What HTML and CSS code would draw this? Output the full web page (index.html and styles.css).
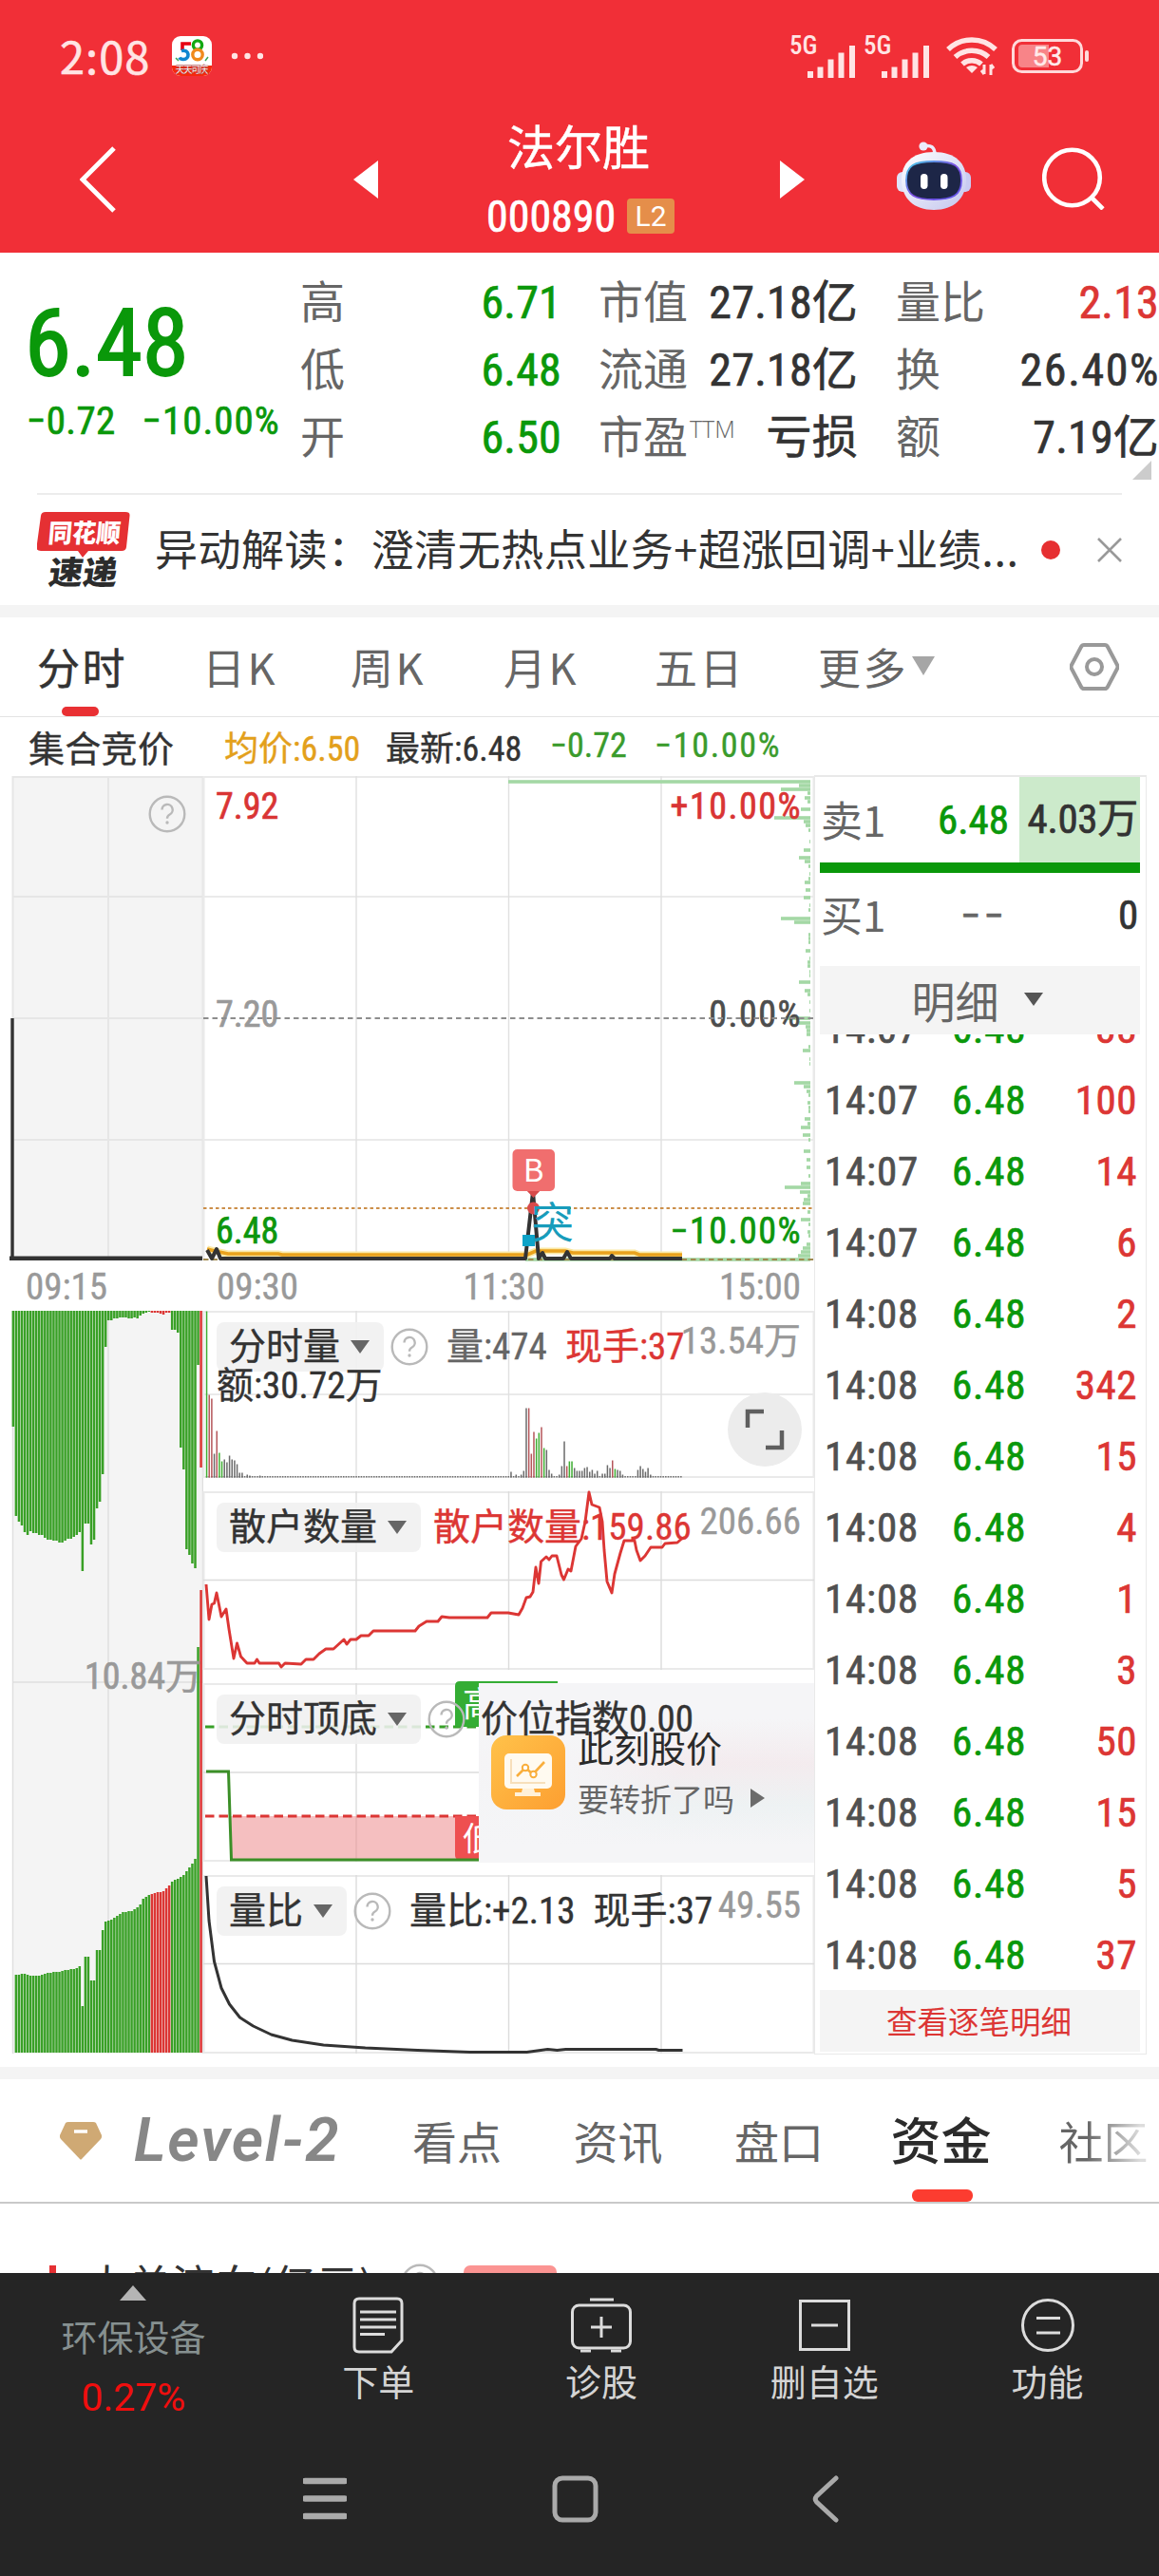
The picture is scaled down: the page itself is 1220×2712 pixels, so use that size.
FILE: index.html
```html
<!DOCTYPE html>
<html lang="zh-CN">
<head>
<meta charset="utf-8">
<title>法尔胜 000890</title>
<link rel="stylesheet" href="styles.css">
</head>
<body>
<svg class="defs" width="0" height="0">
  <symbol id="help" viewBox="0 0 40 40"><circle cx="20" cy="20" r="18.3" fill="none" stroke="#b9b9b9" stroke-width="2.4"/><path d="M14.5 15.5a5.6 5.6 0 1 1 8.2 5c-1.9 1-2.7 2-2.7 4.2" fill="none" stroke="#b9b9b9" stroke-width="2.4"/><circle cx="20" cy="29" r="1.7" fill="#b9b9b9"/></symbol>
  <symbol id="signal" viewBox="0 0 54 34"><path d="M2.5 34v-7M13 34V22.500M24 34V14.500M35 34V7.500M46.500 34V0" transform="translate(1.500 0)" stroke="#ffe4e4" stroke-width="6" fill="none"/></symbol>
</svg>

<header class="header">
  <div class="status">
    <span class="clock">2:08</span>
    <svg class="app58" viewBox="0 0 42 42"><rect width="42" height="42" rx="9" fill="#fff"/><path d="M0 31h42v2a9 9 0 0 1-9 9H9a9 9 0 0 1-9-9z" fill="#f5280d"/><path d="M20 8h-9v7" fill="none" stroke="#e60012" stroke-width="3.600"/><path d="M10 15.500c9-2 9 9 2 9q-3 0-4-2" fill="none" stroke="#1187d0" stroke-width="3.600"/><circle cx="27" cy="9.500" r="4.600" fill="none" stroke="#12a812" stroke-width="3.400"/><circle cx="27" cy="19.500" r="5.200" fill="none" stroke="#f08a1c" stroke-width="3.400"/><path d="M4 23l3 3M38 22l-3 4" stroke="#3aa657" stroke-width="1.500"/><text x="21" y="38.500" text-anchor="middle" font-size="10" font-weight="700" fill="#fff" stroke="#a33" stroke-width=".4" textLength="35">天天可庆</text></svg>
    <svg class="dots" viewBox="0 0 34 8"><circle cx="4" cy="4" r="3.200"/><circle cx="17.500" cy="4" r="3.200"/><circle cx="31" cy="4" r="3.200"/></svg>
    <div class="cell"><b>5G</b><svg width="54" height="34"><use href="#signal"/></svg></div>
    <div class="cell"><b>5G</b><svg width="54" height="34"><use href="#signal"/></svg></div>
    <svg class="wifi" viewBox="0 0 54 42"><g fill="none" stroke="#ffe4e4" stroke-width="5.500"><path d="M2 14a36 36 0 0 1 50 0"/><path d="M9.500 22a26 26 0 0 1 35 0"/><path d="M17 29.500a15 15 0 0 1 20 0"/></g><path d="M21 33q6-4 12 0l-6 6z" fill="#ffe4e4"/><path d="M40 30v10M40 40l-3-4M47 41V30M47 30l3 4" stroke="#ffe4e4" stroke-width="3"/></svg>
    <svg class="battery" viewBox="0 0 82 36"><rect x="1.500" y="1.500" width="72" height="33" rx="9" fill="none" stroke="#ffd9da" stroke-width="3"/><path d="M11 6h28v24H11q-4 0-4-4V10q0-4 4-4z" fill="#f88488"/><rect x="77" y="12" width="4" height="12" rx="2" fill="#ffd9da"/><text x="37.500" y="28" text-anchor="middle" fill="#ffeaea" stroke="#ffeaea" stroke-width=".5" font-size="28">53</text></svg>
  </div>
  <nav class="nav">
    <svg class="back" viewBox="0 0 38 70"><path d="M36 2L3 35l33 33" fill="none" stroke="#fff" stroke-width="5"/></svg>
    <svg class="prev" viewBox="0 0 26 40"><path d="M26 0v40L0 20z" fill="#fff"/></svg>
    <div class="name">
      <h1>法尔胜</h1>
      <div class="code"><span class="num">000890</span><i class="l2">L2</i></div>
    </div>
    <svg class="next" viewBox="0 0 26 40"><path d="M0 0v40l26-20z" fill="#fff"/></svg>
    <svg class="robot" viewBox="0 0 78 72">
      <defs><linearGradient id="shell" x1="0" y1="0" x2="1" y2="1"><stop offset="0" stop-color="#fff"/><stop offset="1" stop-color="#c3c6ee"/></linearGradient><linearGradient id="rim" x1="0" y1="0" x2="1" y2="1"><stop offset="0" stop-color="#43d0e8"/><stop offset=".5" stop-color="#7a4ee0"/><stop offset="1" stop-color="#5b55e8"/></linearGradient></defs>
      <path d="M28 5q12-3 12 9" fill="none" stroke="#ecebfb" stroke-width="3.500"/><circle cx="28" cy="5" r="4.600" fill="#ecebfb"/>
      <rect x="0" y="32" width="14" height="21" rx="6" fill="#dfe3fa"/><rect x="64" y="32" width="14" height="21" rx="6" fill="#c9cbf2"/>
      <path d="M39 11c23 0 34 12 34 29 0 20-13 32-34 32S5 60 5 40c0-17 11-29 34-29z" fill="url(#shell)"/>
      <path d="M39 21c21 0 29 4 29 20s-10 20-29 20-29-4-29-20 8-20 29-20z" fill="#1d2647" stroke="url(#rim)" stroke-width="1.800"/>
      <rect x="25" y="34" width="7.500" height="16" rx="3.700" fill="#fff"/><rect x="46" y="34" width="7.500" height="16" rx="3.700" fill="#fff"/>
    </svg>
    <svg class="search" viewBox="0 0 66 66"><circle cx="31.500" cy="32" r="29.300" fill="none" stroke="#fff" stroke-width="4.600"/><path d="M52 53l12 12" stroke="#fff" stroke-width="4.600"/></svg>
  </nav>
</header>

<section class="quote num">
  <div class="price down"><strong>6.48</strong><div><span>−0.72</span><span class="pct">−10.00%</span></div></div>
  <dl><dt>高</dt><dd class="down">6.71</dd><dt>低</dt><dd class="down">6.48</dd><dt>开</dt><dd class="down">6.50</dd></dl>
  <dl><dt>市值</dt><dd>27.18亿</dd><dt>流通</dt><dd>27.18亿</dd><dt>市盈<sup>TTM</sup></dt><dd>亏损</dd></dl>
  <dl><dt>量比</dt><dd class="up">2.13</dd><dt>换</dt><dd class="pct">26.40%</dd><dt>额</dt><dd>7.19亿</dd></dl>
  <svg class="corner" viewBox="0 0 20 20"><path d="M20 0v20H0z" fill="#ccc"/></svg>
</section>

<section class="news">
  <svg class="newslogo" viewBox="0 0 98 80"><path d="M9 0h84q5 0 4.500 4L94 37q-.5 4-5 4H54l-6 7-5-7H4q-5 0-4.500-4L4 4q.5-4 5-4z" fill="#e53033"/><g font-weight="900" text-anchor="middle"><text transform="translate(49 32) skewX(-5)" font-size="27" fill="#fff" textLength="76" lengthAdjust="spacingAndGlyphs">同花顺</text><text transform="translate(47 76) skewX(-8)" font-size="34" fill="#2c2c2c" textLength="72" lengthAdjust="spacingAndGlyphs">速递</text></g></svg>
  <p>异动解读：澄清无热点业务+超涨回调+业绩...</p>
  <i class="reddot"></i>
  <svg class="close" viewBox="0 0 26 26"><path d="M1 1l24 24M25 1L1 25" stroke="#999" stroke-width="2.600"/></svg>
</section>

<div class="band"></div>

<nav class="periods">
  <a class="on">分时</a><a>日K</a><a>周K</a><a>月K</a><a>五日</a>
  <a class="more">更多<svg viewBox="0 0 24 20"><path d="M0 0h24L12 20z" fill="#a6a6a6"/></svg></a>
  <svg class="hex" viewBox="0 0 52 50"><path d="M15 2h22q2 0 3 2l10 19q1 2 0 4L40 46q-1 2-3 2H15q-2 0-3-2L2 27q-1-2 0-4L12 4q1-2 3-2z" fill="none" stroke="#999" stroke-width="4"/><circle cx="26" cy="25" r="8" fill="none" stroke="#999" stroke-width="4"/></svg>
</nav>

<main class="board">
  <div class="charts">
    <div class="info num"><span>集合竞价</span><span class="avg">均价:6.50</span><span>最新:6.48</span><span class="g">−0.72</span><span class="g pct">−10.00%</span></div>

    <svg class="auction-price" viewBox="10 817 204 510">
      <rect x="13" y="817" width="201" height="510" fill="#f4f4f4"/>
      <path d="M13 818h201M13 944h201M13 1072h201M13 1200h201M13.500 817v510M114 817v510M213.500 817v510" stroke="#e6e6e6" stroke-width="2" fill="none"/>
      <path d="M13 1072v253" stroke="#333" stroke-width="3.400"/><path d="M10 1325.500h203" stroke="#333" stroke-width="6"/>
      <use href="#help" x="156" y="837" width="40" height="40"/>
    </svg>
    <svg class="price-chart" viewBox="214 817 643 510">
      <path d="M214 818h643M214 944h643M214 1200h643M214.500 817v510M856.500 817v510" stroke="#eaeaea" stroke-width="2" fill="none"/>
      <path d="M375 817v510M535.500 817v510M696 817v510" stroke="#e0e0e0" stroke-width="1.400" fill="none"/>
      <g id="distribution" fill="#a4d8a5"></g>
      <g class="axis">
        <text x="227" y="862" fill="#d93434">7.92</text><text class="pct" x="844" y="862" fill="#d93434" text-anchor="end">+10.00%</text>
        <text x="227" y="1081" fill="#999">7.20</text><text class="pct" x="844" y="1081" fill="#4d4d4d" text-anchor="end">0.00%</text>
        <text x="227" y="1309" fill="#0d960d">6.48</text><text class="pct" x="844" y="1309" fill="#0d960d" text-anchor="end">−10.00%</text>
      </g>
      <path d="M214 1072h643" stroke="#8d8d8d" stroke-width="2" stroke-dasharray="5.500 4"/>
      <path d="M214 1272h643" stroke="#cc8f4a" stroke-width="2" stroke-dasharray="3.500 3"/>
      <path d="M214 1326h643" stroke="#a08a50" stroke-width="2" stroke-dasharray="5.500 4"/>
      <path d="M218 1315l8 2 14 3h53l4 1h258l9-4h31l8 2h65l5 2h45" fill="none" stroke="#fbe9a6" stroke-width="7"/>
      <path d="M218 1315l8 2 14 3h53l4 1h258l9-4h31l8 2h65l5 2h45" fill="none" stroke="#e9a21d" stroke-width="3.600"/>
      <path d="M218 1316l5 9 5-10 4 10h321l8-70 6 70 4-6 3 6h19l4-7 4 7h41l2-3 3 3h71" fill="none" stroke="#333" stroke-width="4" stroke-linejoin="round"/>
      <circle cx="561.500" cy="1272" r="6.500" fill="#d84a4a"/>
      <path d="M553 1252h17l-8.500 9z" fill="#d84a4a"/>
      <rect x="539.500" y="1210" width="44.500" height="44" rx="5" fill="#f06e6e"/>
      <text x="561.500" y="1244" font-size="33" fill="#fff" text-anchor="middle">B</text>
      <rect x="550" y="1300" width="13" height="12" fill="#0ea3c8"/>
      <text x="559" y="1304" font-size="45" fill="#189cbb">突</text>
    </svg>
    <div class="auction-time axis-time"><span>09:15</span></div>
    <div class="times axis-time"><span>09:30</span><span>11:30</span><span>15:00</span></div>

    <svg class="auction-volume" viewBox="10 1380 204 782">
      <rect x="13" y="1380" width="201" height="782" fill="#f4f4f4"/>
      <path d="M13 1771h201M13.500 1380v782M114 1380v782M213.500 1380v782" stroke="#dedede" stroke-width="1.400" fill="none"/>
      <g id="auction-bars"></g>
      <text x="212" y="1778" text-anchor="end" class="axis" fill="#999">10.84万</text>
    </svg>

    <div class="panes num">
      <section class="pane p1">
        <svg viewBox="214 1380 643 176">
          <path d="M214 1381h643M214 1468h643M214 1555h643M214.500 1380v176M856.500 1380v176" stroke="#eaeaea" stroke-width="2" fill="none"/>
          <path d="M375 1380v176M535.500 1380v176M696 1380v176" stroke="#e0e0e0" stroke-width="1.400" fill="none"/>
          <g id="volume-bars"></g>
        </svg>
        <div class="legend"><b class="pick">分时量<i></i></b><svg class="q"><use href="#help"/></svg><span class="grey">量:474</span><span class="up">现手:37</span></div>
        <div class="second">额:30.72万</div>
        <em>13.54万</em>
        <svg class="expand" viewBox="0 0 78 78"><circle cx="39" cy="39" r="39" fill="#ececec"/><path d="M21 37V20h17M57 40v18H40" fill="none" stroke="#5f5f5f" stroke-width="4.500"/></svg>
      </section>
      <section class="pane">
        <svg viewBox="214 1570 643 188">
          <path d="M214 1571h643M214 1757h643M214.500 1570v188M856.500 1570v188" stroke="#eaeaea" stroke-width="2" fill="none"/>
          <path d="M214 1663.500h643M375 1570v188M535.500 1570v188M696 1570v188" stroke="#dcdcdc" stroke-width="1.400" fill="none"/>
        </svg>
        <div class="legend"><b class="pick">散户数量<i></i></b><span class="up">散户数量:159.86</span></div>
        <em>206.66</em>
        <svg class="over" viewBox="214 1570 643 188">
          <polyline points="217,1668 220,1705 223,1689 225.500,1688 228,1677 233,1702 238,1694 241,1715 246,1746 249.500,1730 253.500,1744 260,1751 268,1751 270.500,1747 273,1751 293.500,1751 296,1755 300,1751 317,1752 322,1747 330,1747 336,1741 343,1736 351,1736 362,1726 365,1731 369,1726 375,1726 380,1722 388,1722 393,1717 437,1717 441,1712 449,1707 461,1707 465,1702 473,1703 513,1703 517,1698 535,1698 546,1700 550,1693 554,1682 558,1681 561,1676 564,1650 567,1667 569.500,1644 575,1639 578,1642 581,1638 586,1638 591,1658 593.500,1663 598,1652 601,1654 606,1628 612,1620 616,1602 620,1571 623,1584 631,1587 634,1602 636,1632 639,1665 644,1677 647,1657 653,1635 657,1622 668,1622 670,1632 674,1643 679,1638 685,1629 697,1629 700,1625 713,1624 717.500,1620" fill="none" stroke="#dc3634" stroke-width="2.900" stroke-linejoin="round"/>
        </svg>
      </section>
      <section class="pane p3">
        <svg viewBox="214 1772 643 188">
          <path d="M214 1773h643M214 1959h643M214.500 1772v188M856.500 1772v188" stroke="#eaeaea" stroke-width="2" fill="none"/>
          <path d="M214 1866h643M375 1772v188M535.500 1772v188" stroke="#dcdcdc" stroke-width="1.400" fill="none"/>
          <path d="M243 1912h262v45H243z" fill="#f5bfc0"/><path d="M375 1912v45" stroke="#e6afb0" stroke-width="1.400"/>
          <path d="M216 1818h290" stroke="#38a028" stroke-width="3" stroke-dasharray="9.500 5"/>
          <path d="M216 1912h290" stroke="#dc3634" stroke-width="3" stroke-dasharray="9.500 5"/>
          <path d="M484 1770h103v3h-83v45h-25v-43q0-5 5-5z" fill="#34ad34"/><text x="487" y="1807" font-size="36" fill="#fff">高</text>
          <path d="M479 1912h30v46h-25q-5 0-5-5z" fill="#ee4f50"/><text x="487" y="1948" font-size="34" fill="#fff">低</text>
          <path d="M217 1865h23.500l3 93h265" fill="none" stroke="#3b8f27" stroke-width="3"/>
        </svg>
        <div class="promo">
          <svg class="promo-icon" viewBox="0 0 78 78"><defs><linearGradient id="or" x1="0" y1="0" x2="1" y2="1"><stop offset="0" stop-color="#ffc24a"/><stop offset="1" stop-color="#fd9f31"/></linearGradient></defs><rect width="78" height="78" rx="16" fill="url(#or)"/><rect x="14" y="19" width="50" height="37" rx="5" fill="#fffaf0"/><path d="M33 56h12l1 4h6v4H25v-4h7z" fill="#fff1d8"/><path d="M21 25v25h36" fill="none" stroke="#f7dfba" stroke-width="2"/><path d="M27 43l9-9 8 7 12-13" fill="none" stroke="#f9ae3c" stroke-width="2.600"/><circle cx="36" cy="34" r="3.200" fill="#fff" stroke="#f9ae3c" stroke-width="2"/><circle cx="44.500" cy="41" r="3.200" fill="#fff" stroke="#f9ae3c" stroke-width="2"/></svg>
          <div><p>此刻股价</p><p class="sub">要转折了吗<svg viewBox="0 0 15 20"><path d="M0 0l15 10L0 20z" fill="#6b6b6b"/></svg></p></div>
        </div>
        <div class="legend"><b class="pick">分时顶底<i></i></b><svg class="q"><use href="#help"/></svg><span>价位指数0.00</span></div>
      </section>
      <section class="pane p4">
        <svg viewBox="214 1974 643 188">
          <path d="M214 1975h643M214 2161h643M214.500 1974v188M856.500 1974v188" stroke="#eaeaea" stroke-width="2" fill="none"/>
          <path d="M214 2067.500h643M375 1974v188M535.500 1974v188M696 1974v188" stroke="#dcdcdc" stroke-width="1.400" fill="none"/>
          <path d="M217 1975l3 47 5.500 43 7.500 28 8.500 17 11 14 14 9 19 9 22 6 33 5 44 3 55 2.500 55 2h60l22-3 10 1 9-1h95l3 1h25" fill="none" stroke="#333" stroke-width="3" stroke-linejoin="round"/>
        </svg>
        <div class="legend"><b class="pick">量比<i></i></b><svg class="q"><use href="#help"/></svg><span>量比:+2.13</span><span>现手:37</span></div>
        <em>49.55</em>
      </section>
    </div>
  </div>

  <aside class="orders num">
    <div class="level ask"><span>卖1</span><b class="down">6.48</b><b class="vol">4.03万</b></div>
    <div class="level bid"><span>买1</span><b class="none">−−</b><b class="vol">0</b></div>
    <div class="detail-head">明细<svg viewBox="0 0 20 14"><path d="M0 0h20L10 14z" fill="#555"/></svg></div>
    <ol class="ticks">
      <li><span>14:07</span><b>6.48</b><i>38</i></li>
      <li><span>14:07</span><b>6.48</b><i>100</i></li>
      <li><span>14:07</span><b>6.48</b><i>14</i></li>
      <li><span>14:07</span><b>6.48</b><i>6</i></li>
      <li><span>14:08</span><b>6.48</b><i>2</i></li>
      <li><span>14:08</span><b>6.48</b><i>342</i></li>
      <li><span>14:08</span><b>6.48</b><i>15</i></li>
      <li><span>14:08</span><b>6.48</b><i>4</i></li>
      <li><span>14:08</span><b>6.48</b><i>1</i></li>
      <li><span>14:08</span><b>6.48</b><i>3</i></li>
      <li><span>14:08</span><b>6.48</b><i>50</i></li>
      <li><span>14:08</span><b>6.48</b><i>15</i></li>
      <li><span>14:08</span><b>6.48</b><i>5</i></li>
      <li><span>14:08</span><b>6.48</b><i>37</i></li>
    </ol>
    <a class="all-ticks">查看逐笔明细</a>
  </aside>
</main>

<div class="band"></div>

<nav class="topics">
  <svg class="gem" viewBox="0 0 44 40"><path d="M9 0h26q2 0 3 1l6 13q.5 2-1 4L23 39q-1 1-2 0L1 18q-1.500-2-1-4L6 1q1-1 3-1z" fill="#cfa974"/><path d="M15 10h14" stroke="#fff" stroke-width="3.500"/></svg>
  <a class="l2brand">Level-2</a><a>看点</a><a>资讯</a><a>盘口</a><a class="on">资金</a><a class="fade">社区</a>
</nav>
<section class="flow">
  <i class="mark"></i><h2>大单流向(亿元)</h2><svg class="q"><use href="#help"/></svg><span class="tag">Level-2</span>
</section>

<footer class="toolbar">
  <a class="sector"><svg viewBox="0 0 28 16"><path d="M14 0l14 16H0z" fill="#b5b5b5"/></svg><span>环保设备</span><b>0.27%</b></a>
  <a><svg viewBox="0 0 54 60"><path d="M7 2h40q5 0 5 5v39L41 58H7q-5 0-5-5V7q0-5 5-5z"/><path d="M8 16h38M8 24h38M8 32h38M8 39.500h26"/></svg><span>下单</span></a>
  <a><svg viewBox="0 0 64 60"><path d="M20 3h25"/><rect x="1.500" y="9" width="61" height="45" rx="7"/><path d="M32 21v22M21 32h22M10 57h11M42 57h11"/></svg><span>诊股</span></a>
  <a><svg viewBox="0 0 54 60"><rect x="1.500" y="4.500" width="51" height="51"/><path d="M13 30h28"/></svg><span>删自选</span></a>
  <a><svg viewBox="0 0 56 60"><circle cx="28" cy="30" r="26.500"/><path d="M16 22.500h25M16 38h25"/></svg><span>功能</span></a>
</footer>
<footer class="sysnav">
  <svg viewBox="0 0 46 50"><path d="M2 6h42M2 24.500h42M2 43h42" stroke-width="6.500"/></svg>
  <svg viewBox="0 0 50 50"><rect x="3" y="3" width="43" height="44" rx="8" stroke-width="5"/></svg>
  <svg viewBox="0 0 32 50"><path d="M27 3L6.500 22q-2.500 3 0 6L27 47" stroke-width="5"/></svg>
</footer>
<script src="chart.js"></script>
</body>
</html>
```
FILE: chart.js
```js
const NS = 'http://www.w3.org/2000/svg';
const RED = '#dc3634';
const GREEN = '#39a026';

function bar(group, x, y, w, h, fill) {
  const r = document.createElementNS(NS, 'rect');
  r.setAttribute('x', x);
  r.setAttribute('y', y);
  r.setAttribute('width', w);
  r.setAttribute('height', h);
  if (fill) r.setAttribute('fill', fill);
  group.appendChild(r);
}

// Call auction: unmatched volume hangs from the top, matched volume stands at the bottom.
const unmatched = [122,216,222,226,233,236,232,234,234,236,236,239,241,241,242,242,244,244,242,240,240,238,236,233,274,224,224,246,241,208,201,172,38,10,10,8,8,7,7,7,8,8,7,8,5,3,2,1,2,2,2,3,4,2,2,20,20,23,144,167,251,257,266,271,57,165];
const matched = [0,82,82,83,83,82,81,81,81,81,82,83,84,84,85,85,85,86,87,87,88,88,89,91,49,101,101,76,76,108,108,129,138,139,140,142,144,146,148,148,149,149,151,153,156,162,164,166,167,168,169,169,170,173,176,180,182,183,185,187,191,195,199,204,427,487];
const auction = document.getElementById('auction-bars');
const step = 3.042;
unmatched.forEach((v, i) => {
  const red = (i >= 48 && i <= 54) || i === 65;
  bar(auction, 12.6 + i * step, 1380, 2.5, v, red ? RED : GREEN);
});
matched.forEach((v, i) => {
  const red = (i >= 48 && i <= 54) || i === 65;
  bar(auction, 12.6 + i * step, 2161 - v, 2.5, v, red ? RED : GREEN);
});

// Minute volume: [minute index, height, colour]; other traded minutes are a one-pixel stub.
const volume = document.getElementById('volume-bars');
const D = '#6b6b6b', R = '#b5565a', G = '#3fae32';
const minutes = [[0,175,G],[1,87,R],[2,83,R],[3,25,D],[4,49,R],[5,26,G],[6,17,G],[7,19,D],[8,16,D],[9,23,D],[10,19,D],[11,18,D],[12,14,D],[13,5,D],[14,5,D],[16,3,D],[17,2,D],[21,2,D],
[120,6,D],[122,3,D],[124,3,D],[125,7,D],[126,73,D],[127,73,R],[128,25,R],[129,48,R],[130,41,G],[131,47,G],[132,53,R],[133,31,G],[134,29,D],[135,8,D],[136,4,D],[139,3,D],[140,12,D],[141,38,D],[142,12,R],[143,17,G],[144,17,G],[145,10,D],[146,7,D],[147,7,D],[148,7,D],[149,10,D],[150,11,D],[151,6,D],[152,8,D],[153,4,D],[154,7,D],[156,4,D],[157,4,D],[158,13,D],[159,10,D],[160,18,R],[161,9,G],[162,8,D],[163,7,D],[164,3,D],[170,8,D],[171,12,D],[172,9,D],[173,6,D],[174,10,D],[175,3,D]];
for (let i = 0; i < 188; i++) bar(volume, 216.8 + i * 2.67, 1554, 1.5, 1.5, D);
minutes.forEach(([i, h, c]) => bar(volume, 216.8 + i * 2.67, 1555.5 - h, 1.5, h, c));

// Traded volume by price: [y, length].
const dist = document.getElementById('distribution');
[[823,318],[827,12],[831,31],[835,3],[840,6],[844,3],[852,10],[861,38],[865,7],[869,5],[874,2],[886,1],[895,7],[903,12],[907,6],[912,2],[920,1],[925,2],[929,6],[937,5],[945,7],[953,1],[958,2],[967,31],[971,17],[984,2],[988,2],[992,2],[1001,5],[1009,1],[1013,3],[1017,3],[1023,1],[1027,1],[1034,12],[1043,6],[1047,3],[1055,1],[1064,1],[1072,26],[1077,12],[1081,5],[1085,4],[1089,4],[1102,2],[1106,8],[1115,1],[1120,1],[1140,17],[1144,7],[1149,4],[1153,2],[1161,3],[1166,2],[1170,2],[1178,6],[1183,3],[1187,10],[1195,8],[1200,2],[1212,7],[1221,4],[1229,4],[1238,2],[1246,10],[1250,27],[1255,11],[1259,3],[1263,7],[1267,8],[1276,3],[1284,10],[1289,2],[1297,3],[1301,2],[1310,4],[1314,8],[1318,10],[1322,13],[1326,300]
].forEach(([y, w]) => bar(dist, 853 - w, y - 1.8, w, 3.6));
```
FILE: styles.css
```css
* { box-sizing: border-box; }
body { margin: 0; width: 1220px; background: #fff; color: #333; font-family: "Noto Sans CJK SC", sans-serif; font-weight: 400; }
h1, h2, p, dl, dd, ol { margin: 0; padding: 0; font-weight: inherit; }
b, i, em { font-weight: inherit; font-style: normal; }
svg { display: block; flex: none; }
.defs { position: absolute; }
.num, .axis, .axis-time { font-family: "Roboto Condensed", "Noto Sans CJK SC", sans-serif; }
.num, .axis-time { -webkit-text-stroke: .7px currentColor; }
.axis { stroke-width: .7px; }
.axis text[fill="#d93434"] { stroke: #d93434; }
.axis text[fill="#0d960d"] { stroke: #0d960d; }
.axis text[fill="#4d4d4d"] { stroke: #4d4d4d; }
.axis text[fill="#999"], text.axis { stroke: #999; }
.down { color: #0a980a; }
.up { color: #dc3634; }
.grey { color: #666; }
.pct { letter-spacing: 1.5px; }
.band { height: 13px; background: #f4f4f4; }

.header { height: 266px; background: #f12f37; color: #fff; overflow: hidden; }
.status { height: 112px; display: flex; align-items: center; padding: 6px 0 0 63px; color: #ffe4e4; }
.clock { width: 118px; margin-top: -3px; font: 400 47px/60px "Noto Sans CJK SC", sans-serif; letter-spacing: 1px; -webkit-text-stroke: .6px currentColor; }
.app58 { width: 42px; height: 42px; }
.dots { width: 34px; height: 8px; margin-left: 20px; fill: #ffe4e4; margin-right: 554px; }
.cell { width: 78px; height: 46px; position: relative; display: flex; align-items: flex-end; padding-left: 18px; }
.cell b { position: absolute; left: 0; top: -1px; font: 500 27px/26px "Roboto Condensed", sans-serif; }
.wifi { width: 54px; height: 42px; margin-left: 9px; }
.battery { width: 82px; height: 36px; margin-left: 15px; font-family: Roboto, sans-serif; }
.nav { height: 154px; display: flex; align-items: center; }
.back { width: 38px; height: 70px; margin-left: 84px; }
.prev { width: 26px; height: 40px; margin-left: 250px; }
.name { width: 198px; margin: 2px 111px 0 114px; text-align: center; }
.name h1 { margin: 0 -18px 0 -22px; font-size: 50px; line-height: 75px; font-weight: 400; height: 75px; -webkit-text-stroke: .5px #fff; }
.code { display: flex; align-items: center; justify-content: space-between; height: 75px; font-size: 46px; }
.l2 { width: 50px; height: 37px; border-radius: 4px; background: #e58e4a; font: 400 30px/37px Roboto, sans-serif; text-align: center; }
.next { width: 26px; height: 40px; }
.robot { width: 78px; height: 72px; margin: -8px 75px 0 97px; }
.search { width: 66px; height: 66px; margin-top: -3px; }

.quote { position: relative; height: 255px; display: grid; grid-template-columns: 276px 276px 273px 277px; column-gap: 0; padding: 17px 0 0 28px; }
.quote::after { content: ""; position: absolute; left: 39px; right: 39px; bottom: 0; height: 2px; background: #ececec; }
.price strong { display: block; font-size: 99px; line-height: 110px; font-weight: 400; margin: 23px 0 -3px -2px; -webkit-text-stroke: 1.8px currentColor; }
.price div { display: flex; gap: 28px; font-size: 41px; line-height: 60px; letter-spacing: .3px; white-space: nowrap; }
.price .pct { letter-spacing: 1px; }
.quote dl { display: grid; grid-template-columns: auto 1fr; grid-auto-rows: 71px; align-items: center; }
.quote dl:nth-of-type(1) { padding: 0 0 0 12px; margin-right: -11px; }
.quote dl:nth-of-type(2) { padding-left: 50px; margin-right: -50px; }
.quote dl:nth-of-type(3) { padding-left: 90px; margin-right: -90px; width: 367px; }
.quote dt { font-size: 47px; color: #666; line-height: 71px; height: 71px; white-space: nowrap; -webkit-text-stroke: 0; }
.quote dl:nth-of-type(2) dt { width: 104px; }
.quote dd { text-align: right; font-size: 48px; line-height: 71px; height: 71px; letter-spacing: .2px; white-space: nowrap; }
.quote dd.pct { letter-spacing: 1.6px; margin-right: -1px; }
.quote sup { font: 400 25px/1px "Open Sans", sans-serif; font-weight: 300; vertical-align: 16px; margin-left: 2px; }
.corner { position: absolute; left: 1192px; top: 219px; width: 20px; height: 20px; }

.news { height: 116px; display: flex; align-items: center; padding-left: 39px; }
.newslogo { width: 98px; height: 80px; }
.news p { width: 920px; margin: -5px 0 0 26px; font-size: 45px; line-height: 80px; letter-spacing: .52px; white-space: nowrap; }
.reddot { width: 20px; height: 20px; border-radius: 50%; background: #e62f31; margin: 0 39px 0 13px; }
.close { width: 26px; height: 26px; }

.periods { position: relative; height: 105px; border-bottom: 1px solid #e3e3e3; display: grid; grid-template-columns: 174px 156px 161px 159px 172px 265px 60px; align-items: center; padding-left: 39px; font-size: 45px; letter-spacing: 2.5px; color: #666; }
.periods a { display: flex; align-items: center; height: 100%; padding-bottom: 2px; }
.periods .on { position: relative; color: #333; -webkit-text-stroke: .5px #333; }
.periods .on::after { content: ""; position: absolute; left: 26px; bottom: 0; width: 39px; height: 10px; border-radius: 5px; background: #e93033; }
.more svg { width: 24px; height: 20px; margin-left: 4px; }
.hex { width: 52px; height: 50px; }

.board { height: 1421px; display: flex; }
.charts { width: 847px; margin-left: 10px; display: grid; grid-template-columns: 204px 643px; grid-template-rows: 62px 510px 53px 782px; }
.info { grid-column: span 2; display: grid; grid-template-columns: 206px 170px 173px 110px auto; padding: 0 0 2px 20px; align-items: center; font-size: 36px; white-space: nowrap; -webkit-text-stroke-width: .4px; }
.info span:first-child { font-size: 38px; letter-spacing: .3px; }
.info .pct { letter-spacing: 1.7px; }
.avg { color: #e3a01b; }
.g { color: #3a9b2c; }
.auction-price, .auction-volume { width: 204px; height: 100%; }
.price-chart { width: 643px; height: 510px; overflow: visible; }
.axis { font-size: 38px; }
.axis-time { display: flex; justify-content: space-between; font-size: 39px; line-height: 53px; color: #999; padding: 2px 14px 0 14px; height: 53px; -webkit-text-stroke-width: .4px; }
.auction-time { padding-left: 17px; }
.times span:nth-child(2) { margin-right: 10px; }

.panes { display: grid; grid-template-rows: 176px 188px 188px 188px; row-gap: 14px; -webkit-text-stroke-width: .4px; }
.pane { position: relative; font-size: 39px; }
.pane > svg:first-child, .over { position: absolute; left: 0; top: 0; width: 643px; height: 188px; overflow: visible; }
.p1 > svg:first-child { height: 176px; }
.legend { position: relative; display: flex; align-items: center; height: 52px; margin: 0; top: 12px; padding-left: 14px; white-space: nowrap; }
.pick { height: 52px; line-height: 52px; padding: 0 15px 0 13px; border-radius: 8px; background: rgba(240, 240, 240, .88); display: flex; align-items: center; }
.pick i { margin-left: 11px; border: 10px solid transparent; border-top: 14px solid #666; border-bottom: 0; }
.q { width: 40px; height: 40px; margin-left: 7px; }
.legend span { line-height: 52px; margin-left: 19px; }
.legend .pick + span { margin-left: 13px; }
.second { position: absolute; left: 14px; top: 53px; line-height: 52px; }
.pane em { position: absolute; right: 14px; top: 6px; line-height: 52px; color: #999; }
.expand { position: absolute; left: 552px; top: 86px; width: 78px; height: 78px; }
.promo { position: absolute; left: 290px; top: 0; width: 353px; height: 189px; display: flex; padding: 55px 0 0 13px; background: linear-gradient(100deg, rgba(245,245,247,.9) 30%, rgba(245,245,247,.2) 60%), linear-gradient(#f5f5f7 20%, #f3e9ec 45%, #ecf1f2 68%, #f5f5f7 90%); font-family: "Noto Sans CJK SC", sans-serif; color: #2a2a2a; font-size: 38px; -webkit-text-stroke: 0; }
.promo-icon { width: 78px; height: 78px; margin-right: 13px; }
.promo p { line-height: 54px; margin-top: -15px; }
.promo .sub { display: flex; align-items: center; margin-top: 0; font-size: 33px; color: #666; }
.sub svg { width: 15px; height: 20px; margin-left: 17px; }
.p3 .legend span { margin-left: 16px; }

.orders { margin-top: 61px; width: 350px; height: 1347px; border: 1px solid #e9e9e9; border-top-width: 2px; padding: 0 6px 0 5px; font-size: 43px; }
.level { display: grid; grid-template-columns: 124px 86px 127px; align-items: center; height: 89px; line-height: 60px; }
.level span { color: #666; font: 400 44px/60px "Noto Sans CJK SC", sans-serif; padding-left: 1px; letter-spacing: 0; -webkit-text-stroke: 0; margin-top: -3px; }
.vol { height: 89px; line-height: 89px; text-align: right; padding-right: 2px; letter-spacing: -.3px; }
.ask { border-bottom: 11px solid #0a980a; height: 101px; align-items: center; }
.ask .vol { background: #cceacb; height: 90px; }
.bid { height: 98px; padding-bottom: 14px; }
.none { color: #666; padding-left: 24px; letter-spacing: 3px; }
.detail-head { height: 72px; background: #f4f4f4; display: flex; justify-content: center; align-items: center; font: 400 46px/72px "Noto Sans CJK SC", sans-serif; color: #666; padding: 0 6px 2px 0; -webkit-text-stroke: 0; }
.detail-head svg { width: 20px; height: 14px; margin-left: 26px; }
.ticks { height: 1006px; overflow: hidden; list-style: none; }
.ticks li { display: grid; grid-template-columns: 135px 100px 1fr; height: 75px; line-height: 75px; padding: 0 3px 0 5px; letter-spacing: .8px; }
.ticks li:first-child { margin-top: -43px; }
.ticks span { color: #505050; }
.ticks b { color: #0a980a; margin-left: -1px; }
.ticks i { color: #dc3634; text-align: right; letter-spacing: .5px; }
.all-ticks { display: block; height: 65px; background: #f4f4f4; text-align: center; color: #dc3634; font: 400 32.5px/64px "Noto Sans CJK SC", sans-serif; -webkit-text-stroke: 0; padding-right: 2px; }

.topics { height: 131px; border-bottom: 2px solid #c9c9c9; display: flex; align-items: center; font-size: 47px; color: #666; white-space: nowrap; overflow: hidden; }
.gem { width: 44px; height: 40px; margin: 0 34px 0 63px; }
.topics a { width: 169.5px; margin-top: -2px; }
.topics .l2brand { width: 293px; font: italic 600 64px/80px Roboto, sans-serif; color: #878787; letter-spacing: 1.8px; margin-top: 0; }
.topics .on { position: relative; width: 177px; margin: 0 0 0 -5px; height: 100%; line-height: 124px; font-size: 53px; font-weight: 500; color: #2b2b2b; }
.topics .on::after { content: ""; position: absolute; left: 22px; bottom: 0; width: 64px; height: 13px; border-radius: 6px; background: #fc3c30; }
.topics .fade { width: 95px; background: linear-gradient(90deg, #666 30%, #ddd 90%); background-clip: text; color: transparent; }
.flow { height: 73px; padding: 51px 0 0 52px; overflow: hidden; display: flex; align-items: flex-start; }
.mark { flex: none; width: 7px; height: 40px; margin-top: 14px; background: #e53033; }
.flow h2 { width: 305px; margin-left: 31px; font-size: 45px; letter-spacing: .4px; line-height: 66px; white-space: nowrap; }
.flow .q { width: 40px; margin: 12px 26px 0 27px; }
.tag { width: 98px; height: 36px; margin-top: 14px; border-radius: 7px; background: #fb9492; color: #fff; font: 400 26px/40px Roboto, sans-serif; text-align: center; }

.toolbar { height: 169px; background: #252525; color: #d4d4d4; display: flex; font-size: 38px; }
.toolbar a { width: 235px; display: flex; flex-direction: column; align-items: center; padding-top: 25px; }
.toolbar a:nth-child(2) svg, .toolbar a:nth-child(4) svg { width: 54px; }
.toolbar a > svg { height: 60px; fill: none; stroke: #dcdcdc; stroke-width: 3; }
.toolbar a > span { line-height: 56px; }
.toolbar .sector { width: 281px; padding-top: 13px; }
.toolbar .sector svg { width: 28px; height: 16px; stroke: none; }
.toolbar .sector span { color: #869090; line-height: 74px; }
.toolbar .sector b { color: #f00e0e; font: 400 41px/56px Roboto, sans-serif; }
.sysnav { height: 150px; background: #252525; display: flex; padding: 44px 0 0 319px; }
.sysnav svg { height: 50px; fill: none; stroke: #aaa; stroke-linecap: round; margin-right: 216px; width: 46px; }
.sysnav svg:nth-child(2) { width: 50px; margin-right: 222px; }
.sysnav svg:nth-child(3) { width: 32px; margin: 0; }
```
